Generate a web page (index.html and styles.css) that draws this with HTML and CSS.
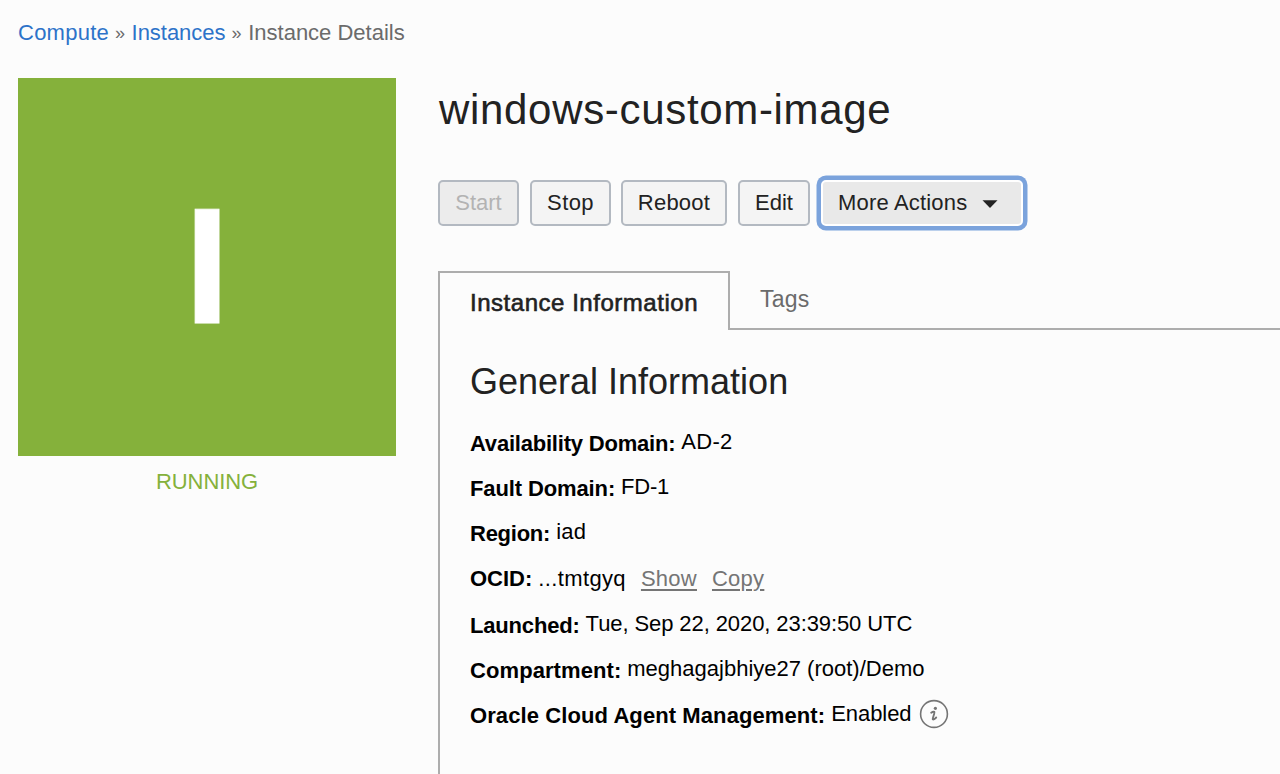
FILE: index.html
```html
<!DOCTYPE html>
<html lang="en">
<head>
<meta charset="utf-8">
<title>Instance Details</title>
<link rel="stylesheet" href="styles.css">
</head>
<body>
<nav class="breadcrumb">
  <a class="crumb crumb-compute" href="#">Compute</a><span class="sep">»</span><a class="crumb crumb-instances" href="#">Instances</a><span class="sep">»</span><span class="crumb-current">Instance Details</span>
</nav>
<div class="layout">
  <aside class="status">
    <div class="tile"><span class="tile-letter">I</span></div>
    <div class="state">RUNNING</div>
  </aside>
  <main class="details">
    <h1 class="title">windows-custom-image</h1>
    <div class="actions">
      <button class="btn start" disabled>Start</button>
      <button class="btn stop">Stop</button>
      <button class="btn reboot">Reboot</button>
      <button class="btn edit">Edit</button>
      <button class="btn more"><span>More Actions</span><svg class="caret" width="16" height="8" viewBox="0 0 16 8"><path d="M0.5 0.2H15.5L8 8Z" fill="#222"/></svg></button>
    </div>
    <div class="tabs">
      <div class="tab active"><span class="tab-text">Instance Information</span></div>
      <div class="tab inactive"><span>Tags</span></div>
    </div>
    <section class="panel">
      <h2 class="heading">General Information</h2>
      <div class="row"><span class="label l1">Availability Domain:</span><span class="value v1">AD-2</span></div>
      <div class="row"><span class="label l2">Fault Domain:</span><span class="value v2">FD-1</span></div>
      <div class="row"><span class="label l3">Region:</span><span class="value v3">iad</span></div>
      <div class="row ocid"><span class="label l4">OCID:</span><span class="value v4">...tmtgyq</span><a class="link show" href="#">Show</a><a class="link copy" href="#">Copy</a></div>
      <div class="row"><span class="label l5">Launched:</span><span class="value v5">Tue, Sep 22, 2020, 23:39:50 UTC</span></div>
      <div class="row"><span class="label l6">Compartment:</span><span class="value v6">meghagajbhiye27 (root)/Demo</span></div>
      <div class="row"><span class="label l7">Oracle Cloud Agent Management:</span><span class="value v7">Enabled</span><svg class="info" width="30" height="30" viewBox="0 0 30 30"><circle cx="15" cy="15" r="13.4" fill="none" stroke="#757575" stroke-width="1.6"/><circle cx="16.4" cy="9.3" r="1.6" fill="#757575"/><path d="M12.2 13.7C13.6 12.7 14.8 12.6 15.3 12.9C16.3 13.5 13.1 19.4 13.8 20.3C14.4 20.9 15.8 20 17.2 18.5" fill="none" stroke="#757575" stroke-width="1.9" stroke-linecap="round"/></svg></div>
    </section>
  </main>
</div>
</body>
</html>
```
FILE: styles.css
```css
* { box-sizing: border-box; }
body {
  margin: 0;
  height: 774px;
  overflow: hidden;
  display: flex;
  flex-direction: column;
  background: #fcfcfc;
  color: #000;
  font: 22px/24px "Liberation Sans", Arial, sans-serif;
  white-space: nowrap;
}
.breadcrumb { display: flex; height: 78px; padding: 21px 0 0 18px; color: #6b6b6b; }
.crumb { color: #2d73c9; text-decoration: none; }
.crumb-compute { width: 97px; letter-spacing: 0.25px; }
.crumb-instances { width: 100px; letter-spacing: -0.04px; }
.sep { width: 16.6px; font-size: 18px; }
.layout { display: flex; flex: 1; gap: 42px; padding-left: 18px; }
.status { width: 378px; flex: none; }
.tile { display: flex; justify-content: center; height: 378px; padding-top: 88px; background: #85b13b; }
.tile-letter { font-size: 166px; line-height: 200px; font-weight: 700; color: #fff; -webkit-text-stroke: 0.8px #fff; }
.state { margin-top: 14px; text-align: center; letter-spacing: -0.1px; color: #85b13b; }
.details { flex: 1; display: flex; flex-direction: column; }
.title { margin: 0; height: 102px; padding: 7px 0 0 1px; font-size: 42px; line-height: 50px; font-weight: 400; letter-spacing: 0.68px; color: #222; }
.actions { display: flex; height: 91px; }
.btn {
  height: 46px;
  padding: 0;
  border: 2px solid #b3b9c1;
  border-radius: 5px;
  background: #f4f4f4;
  color: #222;
  font: inherit;
}
.start { width: 81px; margin-right: 11px; background: #ececec; color: #b3b3b3; }
.stop { width: 81px; margin-right: 10px; letter-spacing: 0.4px; }
.reboot { width: 106px; margin-right: 11px; letter-spacing: 0.25px; }
.edit { width: 72px; margin-right: 11px; }
.more {
  display: flex;
  align-items: center;
  justify-content: space-between;
  width: 202px;
  padding: 0 23px 0 15px;
  border-color: #fff;
  background: #e9e9e9;
  box-shadow: 0 0 0 4.5px #7ba3dc;
  letter-spacing: 0.18px;
}
.caret { margin-top: 2px; }
.tabs { display: flex; height: 59px; }
.tab.active { width: 292px; padding: 18px 0 0 30px; border: 2px solid #adadad; border-bottom: 0; }
.tab-text { font-size: 24px; letter-spacing: 0.53px; color: #222; -webkit-text-stroke: 0.6px #222; }
.tab.inactive { flex: 1; padding: 16px 0 0 30px; border-bottom: 2px solid #adadad; font-size: 23px; letter-spacing: 0.25px; color: #6b6b6b; }
.panel { flex: 1; padding: 31px 0 0 30px; border-left: 2px solid #adadad; }
.heading { margin: 0; height: 69px; font-size: 36px; line-height: 42px; font-weight: 400; color: #222; }
.row { display: flex; height: 45px; }
.label { padding-top: 2px; margin-right: 6px; font-weight: 700; }
.row.ocid { height: 47px; padding-top: 2px; }
.ocid .label { padding-top: 0; }
.l1 { letter-spacing: -0.21px; }
.l2 { letter-spacing: -0.12px; }
.l3 { letter-spacing: -0.25px; }
.l5 { letter-spacing: -0.18px; }
.l6 { letter-spacing: 0.08px; }
.l7 { letter-spacing: 0.09px; }
.v1 { letter-spacing: 0.3px; }
.v2 { letter-spacing: -0.25px; }
.v3 { letter-spacing: 0.3px; }
.v4 { letter-spacing: 0.36px; }
.v5 { letter-spacing: -0.09px; }
.v7 { letter-spacing: -0.05px; }
.link { color: #757575; letter-spacing: 0.25px; text-decoration-thickness: 1.5px; text-underline-offset: 3px; }
.show { margin-left: 15px; }
.copy { margin-left: 15px; }
.info { margin: -3px 0 0 7px; }
```
